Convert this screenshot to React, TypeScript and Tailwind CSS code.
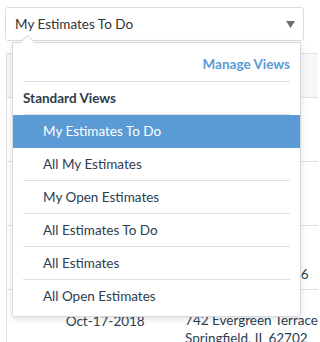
const views = [
  "My Estimates To Do",
  "All My Estimates",
  "My Open Estimates",
  "All Estimates To Do",
  "All Estimates",
  "All Open Estimates",
];

const rows = [
  { date: "", street: "", city: "" },
  { date: "", street: "", city: "" },
  { date: "Oct-12-2018", street: "12 Oak Street", city: "Springfield, IL 62706" },
  { date: "Oct-17-2018", street: "742 Evergreen Terrace", city: "Springfield, IL 62702" },
];

export default function App() {
  const selected = views[0];

  return (
    <div className="relative w-[318px] h-[342px] overflow-hidden bg-white text-[13.5px] text-[#2c3e50] font-['Lato',sans-serif]">
      {/* Select */}
      <div className="pt-[7px] pl-[5px] pr-[14px]">
        <div className="h-[34px] flex items-center justify-between px-[9px] border border-[#d9dde1] rounded-[3px] bg-white">
          <span className="text-[#333]">{selected}</span>
          <svg width="9" height="7" viewBox="0 0 9 7" className="mr-[-1px]">
            <path d="M0 0H9L4.5 7Z" fill="#6f6f6f" />
          </svg>
        </div>
      </div>

      {/* Table behind */}
      <div className="mt-[12px] ml-[6px] border-l border-[#dde1e5]">
        <div className="h-[45px] bg-[#f6f7f8] border-y border-[#dde1e5]" />
        {rows.map((r, i) => (
          <div key={i} className="h-[64px] border-b border-[#dde1e5] flex items-start pt-[21px] whitespace-nowrap">
            <div className="w-[58px]" />
            <div className="w-[121px] pl-[1px]">{r.date}</div>
            <div className="leading-[18px]">
              <div>{r.street}</div>
              <div>{r.city}</div>
            </div>
          </div>
        ))}
      </div>

      {/* Dropdown */}
      <div className="absolute left-[12px] top-[42px] w-[289px] bg-white border border-[#d5d9dd] rounded-b-[3px] shadow-[0_2px_6px_rgba(0,0,0,0.12)]">
        <div className="absolute left-[9px] -top-[6px] w-[11px] h-[11px] rotate-45 bg-white border-l border-t border-[#d5d9dd]" />
        <div className="relative h-[38px] flex items-end justify-end pr-[10px] pb-[7px] font-bold text-[#5b9bd5]">
          Manage Views
        </div>
        <div className="mx-[10px] border-t border-[#dde1e5]" />
        <div className="h-[32px] flex items-center px-[10px] font-bold text-[#2c3e50]">Standard Views</div>
        <div className="mx-[10px] border-t border-[#dde1e5]" />
        <div className="pb-[4px]">
          {views.map((v, i) => (
            <div key={v}>
              {i > 1 && <div className="mx-[10px] border-t border-[#dde1e5]" />}
              <div
                className={
                  v === selected
                    ? "h-[33px] flex items-center pl-[30px] bg-[#5b9bd5] text-white"
                    : "h-[32px] flex items-center pl-[30px] text-[#2c3e50]"
                }
              >
                {v}
              </div>
            </div>
          ))}
        </div>
      </div>
    </div>
  );
}
